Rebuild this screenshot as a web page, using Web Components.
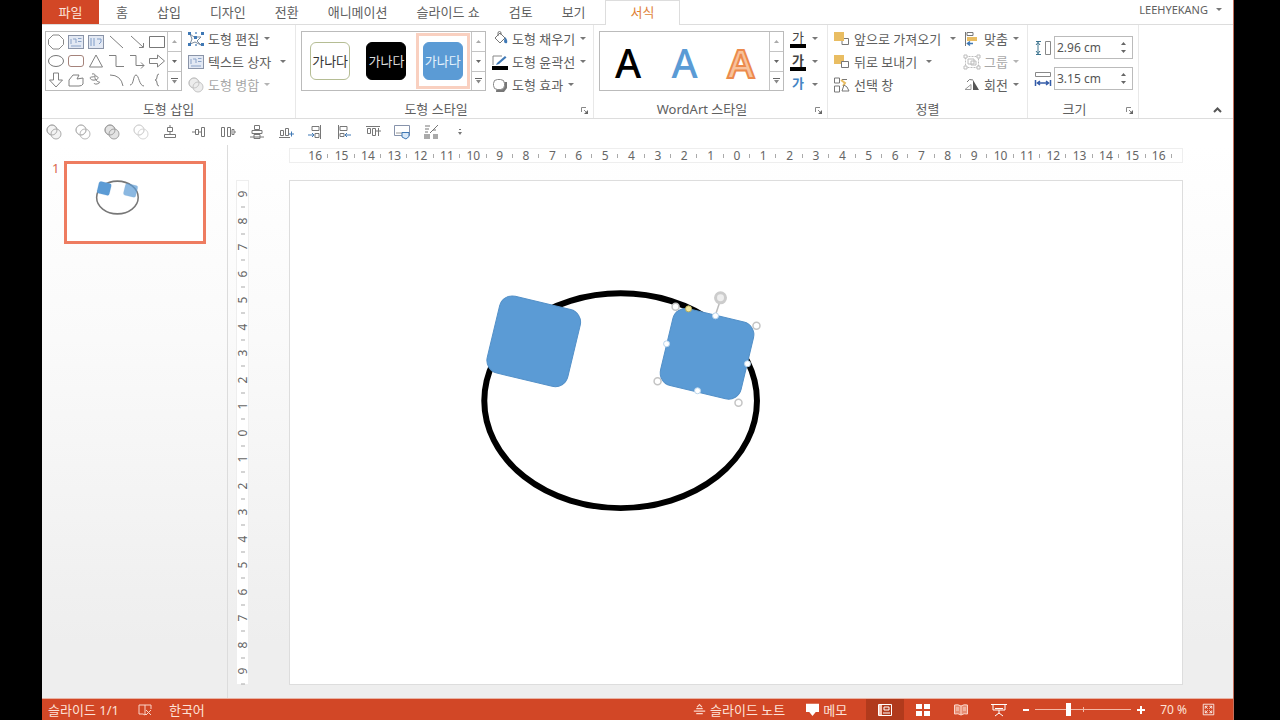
<!DOCTYPE html>
<html lang="ko">
<head>
<meta charset="utf-8">
<title>프레젠테이션 편집기</title>
<style>
html,body{margin:0;height:100%;background:#000}
body{font-family:"Noto Sans","Noto Sans CJK KR",sans-serif;font-size:13px;line-height:20px;color:#606060}
</style>
</head>
<body>
<deck-app></deck-app>
<script>
const define = (name, html, setup) => {
  const t = document.createElement('template');
  t.innerHTML = html;
  customElements.define(name, class extends HTMLElement {
    connectedCallback() {
      if (this.shadowRoot) return;
      this.attachShadow({ mode: 'open' }).append(t.content.cloneNode(true));
      if (setup) setup(this, this.shadowRoot);
    }
  });
};

const G = '#8a8a8a', B = '#3f78b5', Y = '#e9bd62';
const merge = (fill, o) => `<g fill="${fill}" stroke="${G}" opacity="${o}"><circle cx="6" cy="6" r="5"/><circle cx="10" cy="10" r="5"/><circle cx="6" cy="6" r="5" fill="none"/></g>`;
const ln = (d, c = '#808080') => `<path d="${d}" fill="none" stroke="${c}"/>`;
const ICONS = {
  circle: `<path d="M5 1h6l4.500 4.500v5L11 15H5L.5 10.500v-5z" stroke-linejoin="round" fill="none" stroke="#888"/>`,
  textbox: `<rect x=".5" y="1.500" width="15" height="13" fill="#e3e9f4" stroke="#8a94a8"/><path d="M3 10V5M5 5h3v4M10 4.500h3.500M10 7.500h3.500M3 12h10" fill="none" stroke="#8ba3c8"/>`,
  vtextbox: `<rect x=".5" y="1.500" width="15" height="13" fill="#e3e9f4" stroke="#8a94a8"/><path d="M9 5h4v3l-2 2M3 4v8M6 4v8" fill="none" stroke="#7f9cc8"/>`,
  line: ln('M1 2l13 12'),
  arrow: ln('M2 2l12 11M14.500 9v4.500H10'),
  rect: `<path d="M.5 2.500h15v11H.5z" fill="none" stroke="#777"/>`,
  oval: `<ellipse cx="8" cy="8" rx="7.500" ry="5.500" fill="none" stroke="#777"/>`,
  rrect: `<rect x=".5" y="2.500" width="15" height="11" rx="2.500" fill="none" stroke="#a5837b"/>`,
  tri: ln('M8 2L14.500 14h-13z'),
  elbow: ln('M0 2.500h7v11h8'),
  elbowarrow: ln('M1 2.500h6v10h8M12 9.500l3 3-3 3'),
  rarrow: ln('M.5 5.500h8V2l7 6-7 6v-3.500h-8z'),
  darrow: ln('M5.500 1h5v7h4L8 15 1.500 8h4z'),
  free: ln('M5 3h6L9 7l6-1v6q-1 2-4 2H1V8z'),
  scribble: ln('M4 2c4-1 4 3 0 3s-1 4 3 3 4-3 1-4 0 6 3 6-4 4-5 1'),
  arc: ln('M1 3q11 0 13 11'),
  curve: ln('M1 13C5 13 4 3 7 3s3 11 8 11'),
  brace: ln('M10 2Q8 2 8 5t-2 3q2 0 2 3t2 3'),
  edit: `<path d="M2 3l4 3h7l-4 4 4 4-6-3-5 2 2-5z" fill="none" stroke="#7a8a9c"/><g fill="${B}"><path d="M0 1h3v3H0zM0 12h3v3H0zM13 1h3v3h-3zM13 12h3v3h-3zM6 5h3v3H6z"/><path d="M7 1h2v2H7zM7 13h2v2H7z" opacity=".6"/></g>`,
  merge: merge('#ddd', .9),
  union: merge('#eee', .7),
  combine: merge('none', .6),
  fragment: merge('#ddd', .8),
  subtract: merge('none', .35),
  bucket: `<path d="M3 7l5-5 5 5-5 5z" fill="#fff" stroke="#777"/><path d="M6 5V2q0-1.500 1.500-1.500T9 2v2" fill="none" stroke="#777"/><path d="M13 6q3 3 2 6-3 1-3-2z" fill="${B}"/>`,
  outline: `<path d="M1 2h9M1 2v9" stroke="#888" fill="none"/><path d="M5 9l8-7 1.500 1.500L7 10l-3 1z" fill="${B}"/><path d="M0 12h16v4H0z" fill="#000"/>`,
  effect: `<path d="M5 5h10v6l-3 4H4z" fill="#777"/><rect x="1.500" y="2.500" width="11" height="10" rx="4" fill="#fff" stroke="#888"/>`,
  front: `<path d="M8 7.500h6.500v6H8z" fill="#fff" stroke="#777"/><path d="M0 1h10v9H0z" fill="${Y}"/>`,
  back: `<path d="M0 1h10v9H0z" fill="${Y}"/><path d="M7.500 7.500h7v6h-7z" fill="#fff" stroke="#777"/>`,
  pane: `<path d="M.5 1h5v5h-5zM.5 9h5v6h-5zM8 2.500h5" fill="#fff" stroke="#777"/><path d="M7 3l4 3-2 3" stroke="${Y}" stroke-width="2" fill="none"/><path d="M10 8l-2 6h7l-2-4z" fill="none" stroke="#777"/>`,
  align: `<path d="M1.500 1v14" stroke="#777"/><path d="M3 1.500h6v3H3z" fill="none" stroke="#777"/><path d="M3 6h10v4H3z" fill="${Y}"/><path d="M3 12.500h6M6 10.500l-2.500 2 2.500 2" stroke="${B}" stroke-width="1.500" fill="none"/>`,
  group: `<g fill="none" stroke="#888"><path d="M1.500 2.500h13v11h-13z" stroke-dasharray="2 1"/><path d="M4 5h6v5H4zM7 7h5v4H7z"/><path d="M0 1h3v3H0zM13 1h3v3h-3zM0 12h3v3H0zM13 12h3v3h-3z" fill="#fff"/></g>`,
  rotate: `<path d="M1 12.500h6v-5z" fill="#fff" stroke="#999"/><path d="M9 13V3l6 10z" fill="#555"/><path d="M3 5q2-4 6-2" fill="none" stroke="#777"/>`,
  height: `<path d="M3 2v12M1 1.500h5M1 14.500h5M1 5l2-2.500L5 5M1 11l2 2.500L5 11" stroke="#3d748f" fill="none"/><path d="M10.500 1.500h5v13h-5z" fill="#fff" stroke="#888"/>`,
  width: `<path d="M.5 1.500h15v4H.5z" fill="#fff" stroke="#888"/><path d="M2 12h12M.5 9v6M15.500 9v6M5 10l-2.500 2L5 14M11 10l2.500 2-2.500 2" stroke="#345ca8" stroke-width="1.500" fill="none"/>`,
  acenter: ln('M8 1v2M5.500 3.500h5v4h-5zM8 8v2M2.500 10.500h11v3h-11z', '#777'),
  dleft: ln('M1 8h3M4.500 5.500h3v5h-3zM10.500 3.500h3v9h-3zM8 8h2', '#777'),
  dright: ln('M1.500 3.500h3v9h-3zM7.500 3.500h3v9h-3zM12 5.500h2v5h-2zM14 8h2', '#777'),
  amid: ln('M5.500 1.500h5v4h-5zM3 6.500h10v3H3zM5 10.500h6v4H5zM1 13h14', '#777'),
  bottom: ln('M1 13.500h11M2.500 6.500h3v5h-3zM7.500 4.500h3v7h-3z', '#777') + ln('M11 10h5M13.500 7.500v5', B),
  right: ln('M13.500 1v14M5 2.500h7v4H5zM8 9.500h4v4H8z', '#777') + ln('M1 11h6M5 9l2 2-2 2', B),
  left: ln('M2.500 1v14M4 2.500h7v4H4zM4 9.500h4v3H4z', '#777') + ln('M15 11H9M11 9l-2 2 2 2', B),
  top: ln('M1 2.500h14M2.500 4.500h3v5h-3zM7.500 4.500h3v7h-3z', '#777') + ln('M13.500 4v8M11 7h5', '#777'),
  picture: `<path d="M.5 1.500h15v10H.5z" fill="#fff" stroke="#8793ab"/><path d="M2 9h6" stroke="#999"/><path d="M8 8.500h7v4l-3 2.500-4-2z" fill="#d9e8f7" stroke="${B}"/>`,
  eyedrop: ln('M2 2h5M2 5h4M2 8h3M7 9l8-8M10 6h3M10 12.500h5M12.500 10v5', '#777') + '<path d="M1 10h6v5H1zM10 10h5v5h-5z" fill="#aaa"/>',
  more: '<path d="M7 5h2v1H7zM6 8h4l-2 3z" fill="#777"/>',
  proof: `<g stroke="#fbd5c9" fill="none"><path d="M8 3v10M8 3H2v9h4l2 1 1-1M8 3h6v4M9 8l5 5M14 8l-5 5"/></g>`,
  notes: `<g stroke="#fbd5c9" fill="none"><path d="M4 7h8M5 5l3-3 3 3M1 10h14M4 13h8" stroke-width="1.500"/></g>`,
  memo: `<path d="M0 1h16v10h-4l-4 5-4-5H0z" fill="#fff"/>`,
  normal: `<path d="M1.500 2.500h13v11h-13z" fill="none" stroke="#fff"/><path d="M2 3h3v10H2z" fill="#f7c5b5"/><path d="M7 5h5v3H7zM6 11h7" fill="none" stroke="#fff"/>`,
  sorter: `<path d="M1 2h6v5H1zM9 2h6v5H9zM1 9h6v5H1zM9 9h6v5H9z" fill="#fff"/>`,
  reading: `<path d="M8 4Q5 2 1.500 3v9Q5 11 8 13q3-2 6.500-1V3Q11 2 8 4v9" fill="#e78c72" stroke="#fbd5c9"/><path d="M3 6h3M3 8h3M10 6h3M10 8h3" stroke="#fbd5c9"/>`,
  show: `<path d="M0 2.500h16M2 3v5h12V3M8 8v4M4 14l4-3 4 3" fill="none" stroke="#fff"/><path d="M4 6.500h8" stroke="#fff"/>`,
  fit: `<g fill="none" stroke="#fff"><path d="M1.500 1.500h13v13h-13z"/><path d="M4 7V4h3M9 4h3v3M12 9v3H9M7 12H4V9M4 4l3 3M12 4L9 7M12 12L9 9M4 12l3-3"/></g>`
};
define('ui-icon', `<style>:host{display:inline-flex;flex:none;width:16px;height:16px}:host([small]){width:13px;height:13px}svg{width:100%;height:100%;overflow:visible}</style>`,
  (h, r) => r.innerHTML += `<svg viewBox="0 0 16 16" aria-hidden="true">${ICONS[h.getAttribute('name')] || ''}</svg>`);

const BTN = 'button{all:unset;box-sizing:border-box;cursor:default;display:flex;align-items:center}';
const CARET = '.caret{flex:none;border:solid transparent;border-width:3px 3px 0;border-top-color:#777}';

define('ribbon-tab', `<style>:host{display:flex}${BTN}
 button{padding:0;white-space:nowrap}
 :host([kind=file]) button{background:#d24726;color:#fbe3da;width:57px;justify-content:center;margin-right:-12px}
 :host([kind=active]){margin:0 0 -1px -10px}
 :host([kind=active]) button{background:#fff;color:#e07f35;border:1px solid #ddd;border-bottom:0;padding:0 25px 2px}
 </style><button type="button" role="tab"><slot></slot></button>`);

define('ribbon-group', `<style>
 :host{display:grid;grid-template-rows:1fr 20px;box-sizing:border-box;border-right:1px solid #e8e8e8;padding-top:2px;position:relative}
 .body{display:flex;align-items:flex-start}
 .name{text-align:center;line-height:22px}
 :host([launcher]) .name{padding-right:17px}
 button{all:unset;position:absolute;right:4px;bottom:3px;width:9px;height:9px}
 svg{display:block}
 </style><div class="body"><slot></slot></div><div class="name"></div>`, (h, r) => {
  r.querySelector('.name').textContent = h.getAttribute('name');
  if (h.hasAttribute('launcher')) r.innerHTML += `<button type="button" aria-label="${h.getAttribute('name')} 옵션"><svg width="9" height="9"><path d="M1.500 6V1.500H6M4 4l3 3" fill="none" stroke="#888"/><path d="M8 4v4H4z" fill="#666"/></svg></button>`;
});

define('tool-button', `<style>:host{display:block;height:23px}${BTN}${CARET}
 button{height:100%;gap:4px;white-space:nowrap}
 .caret{margin-left:1px}
 :host([wide]) .caret{margin-left:5px}
 :host([disabled]){opacity:.55}
 </style><button type="button"><slot></slot></button>`, (h, r) => {
  const b = r.querySelector('button');
  b.insertAdjacentHTML('afterbegin', `<ui-icon name="${h.getAttribute('icon')}"></ui-icon>`);
  if (!h.hasAttribute('plain')) b.insertAdjacentHTML('beforeend', '<span class="caret"></span>');
  b.disabled = h.hasAttribute('disabled');
});

define('glyph-button', `<style>:host{display:block;height:23px}${BTN}${CARET}
 button{height:100%;gap:6px}
 .g{width:16px;text-align:center;font-size:13px;line-height:14px;height:18px;box-sizing:border-box;border-bottom:4px solid #000;color:#444}
 :host([look=outline]) .g{font-weight:bold}
 :host([look=glow]) .g{border-color:transparent;color:#4585c4;font-weight:bold}
 </style><button type="button"><span class="g"><slot></slot></span><span class="caret"></span></button>`);

define('gallery-box', `<style>:host{display:flex;height:60px;box-sizing:border-box;border:1px solid #bbb;background:#fff;margin-top:4px}
 .items{display:flex;flex:1}
 .bar{display:grid;grid-template-rows:repeat(3,1fr);width:13px;border-left:1px solid #c4c4c4}
 button{all:unset;display:flex;align-items:center;justify-content:center}
 button+button{border-top:1px solid #c4c4c4}
 </style><div class="items"><slot></slot></div>
 <div class="bar"><button type="button" aria-label="위로"><svg width="5" height="3"><path d="M0 3h5L2.500 0z" fill="#aaa"/></svg></button>
 <button type="button" aria-label="아래로"><svg width="5" height="3"><path d="M0 0h5L2.500 3z" fill="#666"/></svg></button>
 <button type="button" aria-label="자세히"><svg width="7" height="6"><path d="M0 .5h7" stroke="#666"/><path d="M1 2h5L3.500 5.500z" fill="#888"/></svg></button></div>`);

define('shape-grid', `<style>:host{display:grid;grid-template-columns:repeat(6,1fr);grid-template-rows:repeat(3,1fr);flex:1;place-items:center}</style>`, (h, r) => {
  r.innerHTML += 'circle textbox vtextbox line arrow rect oval rrect tri elbow elbowarrow rarrow darrow free scribble arc curve brace'
    .split(' ').map(n => `<ui-icon name="${n}"></ui-icon>`).join('');
});

define('style-swatch', `<style>:host{display:flex;flex:1;align-items:center;justify-content:center;margin:1px;border:3px solid transparent}
 :host([selected]){border-color:#f9d0c0}
 button{all:unset;width:38px;height:36px;border:1px solid var(--line);border-radius:6px;background:var(--fill);color:var(--ink);text-align:center;line-height:32px;white-space:nowrap}
 </style><button type="button"><slot></slot></button>`);

define('art-letter', `<style>:host{display:flex;flex:1;align-items:center;justify-content:center}
 button{all:unset;font-size:40px;line-height:56px;padding-top:4px;color:#000;font-weight:500}
 :host([look=blue]) button{color:#5b9bd5}
 :host([look=orange]) button{color:#f8c29c;font-weight:600;-webkit-text-stroke:2px #ec8a4c}
 </style><button type="button"><slot></slot></button>`);

define('spin-field', `<style>:host{display:flex;align-items:center;gap:3px;min-width:0}
 label{display:flex}
 .box{display:flex;flex:1;min-width:0;box-sizing:border-box;height:23px;border:1px solid #bbb;background:#fff}
 input{all:unset;flex:1 1 0;width:0;min-width:0;padding-left:2px;font-size:12px;color:#555}
 .s{display:grid;width:17px;padding:2px 0}
 button{all:unset;display:flex;align-items:center;justify-content:center}
 </style><label for="v"></label><div class="box"><input id="v" type="text"><span class="s"><button type="button" aria-label="늘리기"><svg width="5" height="3"><path d="M0 3h5L2.500 0z" fill="#666"/></svg></button><button type="button" aria-label="줄이기"><svg width="5" height="3"><path d="M0 0h5L2.500 3z" fill="#666"/></svg></button></span></div>`, (h, r) => {
  r.querySelector('label').innerHTML = `<ui-icon name="${h.getAttribute('icon')}"></ui-icon>`;
  const i = r.querySelector('input');
  i.setAttribute('aria-label', h.getAttribute('label'));
  i.value = h.getAttribute('value');
});

define('quick-bar', `<style>:host{display:flex;align-items:center;gap:13px;height:26px;padding-left:4px;background:#fff}
 button{all:unset;display:flex}</style>`, (h, r) => {
  r.innerHTML += 'union combine fragment subtract acenter dleft dright amid bottom right left top picture eyedrop more'
    .split(' ').map(n => `<button type="button" aria-label="${n}"><ui-icon name="${n}"></ui-icon></button>`).join('');
});

define('ruler-bar', `<style>
 :host{display:flex;box-sizing:border-box;background:#fff;font-size:12px;line-height:14px;color:#666;border:1px solid #eee;padding:0 10px 0 12px}
 span{flex:1 1 0;position:relative;display:flex;align-items:center;justify-content:center}
 span::after,span:first-child::before{content:"";position:absolute;background:#aaa;width:1px;height:4px;right:0;top:5px}
 :host([vertical]){flex-direction:column;padding:0}
 :host([vertical]) span{writing-mode:vertical-rl;transform:rotate(180deg);line-height:12px}
 :host([vertical]) span::after{width:4px;height:1px;left:3px;right:auto;top:0}
 </style>`, (h, r) => {
  const n = +h.getAttribute('extent');
  for (let i = -n; i <= n; i++) {
    const s = document.createElement('span');
    s.textContent = Math.abs(i);
    r.append(s);
  }
});

define('slide-view', `<style>:host{display:block;background:#fff}svg{display:block;width:100%;height:auto}
 .ring{stroke:#000;stroke-width:6}
 .sel{fill:#fff;stroke:#c4c4c4;stroke-width:1.500}
 :host([thumb]) .ring{stroke:#777;stroke-width:10}
 :host([thumb]) .handles{display:none}
 :host([thumb]) .second{opacity:.7}
 </style><svg viewBox="0 0 893 504" role="img" aria-label="타원과 둥근 사각형 두 개">
 <ellipse class="ring" cx="331" cy="220" rx="136.500" ry="107.500" fill="none"/>
 <g fill="#5b9bd5" stroke="#5390c8" stroke-width="1"><rect x="-41.500" y="-39.500" width="83" height="79" rx="13" transform="translate(244 160.500) rotate(13.500)"/>
 <rect class="second" x="-41.500" y="-39.500" width="83" height="79" rx="13" transform="translate(417.500 173) rotate(13.500)"/></g>
 <g class="handles"><path d="M426 134l4-12" stroke="#bbb" stroke-width="1.500"/>
 <circle cx="431" cy="117" r="5" fill="#eee" stroke="#ccc" stroke-width="3"/>
 <g class="sel"><circle cx="386" cy="126" r="3.500"/><circle cx="467" cy="145" r="3.500"/><circle cx="449" cy="222" r="3.500"/><circle cx="368" cy="200.500" r="3.500"/></g>
 <g fill="#fff" stroke="#b8d3ea"><circle cx="426" cy="135" r="3"/><circle cx="377" cy="163" r="3"/><circle cx="458" cy="183" r="3"/><circle cx="408" cy="210" r="3"/></g>
 <circle cx="399" cy="128" r="3" fill="#f3e9a0" stroke="#b9b05c"/></g></svg>`);

define('thumb-list', `<style>:host{display:flex;align-items:flex-start;box-sizing:border-box;padding:16px 21px 0 10px;gap:5px;border-right:1px solid #dcdcdc}
 .n{color:#d9674c;line-height:14px;width:7px}
 slide-view{flex:1;border:3px solid #ee7c60}
 </style><span class="n">1</span><slide-view thumb></slide-view>`);

define('work-area', `<style>
 :host{display:grid;grid-template-columns:186px 1fr;background:linear-gradient(#fff,#fafafa 35%,#eee 90%)}
 .stage{display:grid;grid-template-columns:13px 1fr;grid-template-rows:15px auto;column-gap:40px;row-gap:17px;padding:3px 50px 0 8px;align-content:start}
 .stage>:first-child{grid-column:2}
 .page{border:1px solid #ddd;margin:0}
 </style><thumb-list></thumb-list><div class="stage"><ruler-bar extent="16"></ruler-bar><ruler-bar vertical extent="9"></ruler-bar><slide-view class="page"></slide-view></div>`);

define('status-bar', `<style>
 :host{display:flex;align-items:center;height:21px;background:#d24726;color:#fde2d8;padding:0 18px 0 6px;border-top:1px solid #e9b3a4;white-space:nowrap}
 ${BTN}
 button{gap:4px;height:100%}
 .lang{margin-left:18px}.lang2{margin-left:16px}.right{margin-left:auto;display:flex;align-items:center;height:100%}
 .memo{margin-left:21px}
 .views{display:flex;height:100%;margin:0 4px 0 19px}
 .views button{width:38px;justify-content:center}
 .views .on{background:#b13a1c}
 input{appearance:none;width:96px;height:16px;margin:0 6px 0 5px;background:linear-gradient(#f3b9a7,#f3b9a7) center/1px 5px no-repeat,linear-gradient(#f3b9a7,#f3b9a7) center/100% 1px no-repeat}
 input::-webkit-slider-thumb{appearance:none;width:5px;height:13px;background:#fff}
 .sign{width:8px;height:8px}
 .zoom{font-size:12px;margin:0 15px}
 </style><span>슬라이드 1/1</span><button type="button" class="lang" aria-label="맞춤법 검사"><ui-icon name="proof"></ui-icon></button><button type="button" class="lang2">한국어</button>
 <div class="right"><button type="button"><ui-icon name="notes" small></ui-icon>슬라이드 노트</button>
 <button type="button" class="memo"><ui-icon name="memo" small></ui-icon>메모</button>
 <div class="views"><button type="button" class="on" aria-label="기본"><ui-icon name="normal"></ui-icon></button><button type="button" aria-label="여러 슬라이드"><ui-icon name="sorter"></ui-icon></button><button type="button" aria-label="읽기용 보기"><ui-icon name="reading"></ui-icon></button><button type="button" aria-label="슬라이드 쇼"><ui-icon name="show"></ui-icon></button></div>
 <button type="button" class="sign" aria-label="축소"><svg width="8" height="8"><path d="M1 4h6" stroke="#fff" stroke-width="2"/></svg></button>
 <input type="range" min="0" max="100" value="34" aria-label="확대/축소">
 <button type="button" class="sign" aria-label="확대"><svg width="8" height="8"><path d="M0 4h8M4 0v8" stroke="#fff" stroke-width="2"/></svg></button>
 <span class="zoom">70 %</span><button type="button" aria-label="창에 맞춤"><ui-icon name="fit" small></ui-icon></button></div>`);

define('deck-app', `<style>
 :host{display:grid;grid-template-rows:25px 94px 26px 1fr auto;box-sizing:border-box;min-height:100vh;margin:0 46px 0 42px;background:#fff;border-right:1px solid #c4705c}
 .tabs{display:flex;gap:29px;border-bottom:1px solid #ddd}
 .user{all:unset;margin:0 11px 5px auto;font-size:11px;display:flex;align-items:center;gap:8px}
 ${CARET}
 .ribbon{display:grid;grid-template-columns:254px 298px 234px 200px 111px 1fr;border-bottom:1px solid #ddd}
 .col{display:grid;grid-template-rows:repeat(3,23px);justify-items:start}
 .g1{width:137px;margin-left:3px}.g2,.g3{width:185px;margin-left:5px}
 .c1,.c2,.c3,.c4{margin-left:6px}.c4{width:130px}
 .size{display:grid;gap:8px;margin:9px 5px 0 7px;flex:1;min-width:0}
 .fold{all:unset;align-self:end;justify-self:end;margin:0 11px 5px 0;display:flex}
 </style>
 <div class="tabs" role="tablist"><ribbon-tab kind="file">파일</ribbon-tab><ribbon-tab>홈</ribbon-tab><ribbon-tab>삽입</ribbon-tab><ribbon-tab>디자인</ribbon-tab><ribbon-tab>전환</ribbon-tab><ribbon-tab>애니메이션</ribbon-tab><ribbon-tab>슬라이드 쇼</ribbon-tab><ribbon-tab>검토</ribbon-tab><ribbon-tab>보기</ribbon-tab><ribbon-tab kind="active">서식</ribbon-tab>
 <button type="button" class="user">LEEHYEKANG<span class="caret"></span></button></div>
 <div class="ribbon">
 <ribbon-group name="도형 삽입"><gallery-box class="g1"><shape-grid></shape-grid></gallery-box>
  <div class="col c1"><tool-button icon="edit">도형 편집</tool-button><tool-button icon="textbox" wide>텍스트 상자</tool-button><tool-button icon="merge" disabled>도형 병합</tool-button></div></ribbon-group>
 <ribbon-group name="도형 스타일" launcher><gallery-box class="g2"><style-swatch style="--fill:#fff;--line:#b5bd94;--ink:#333">가나다</style-swatch><style-swatch style="--fill:#000;--line:#000;--ink:#ddd">가나다</style-swatch><style-swatch selected style="--fill:#5b9bd5;--line:#5b9bd5;--ink:#e6f2fc">가나다</style-swatch></gallery-box>
  <div class="col c2"><tool-button icon="bucket">도형 채우기</tool-button><tool-button icon="outline">도형 윤곽선</tool-button><tool-button icon="effect">도형 효과</tool-button></div></ribbon-group>
 <ribbon-group name="WordArt 스타일" launcher><gallery-box class="g3"><art-letter>A</art-letter><art-letter look="blue">A</art-letter><art-letter look="orange">A</art-letter></gallery-box>
  <div class="col c3"><glyph-button>가</glyph-button><glyph-button look="outline">가</glyph-button><glyph-button look="glow">가</glyph-button></div></ribbon-group>
 <ribbon-group name="정렬"><div class="col c4"><tool-button icon="front" wide>앞으로 가져오기</tool-button><tool-button icon="back" wide>뒤로 보내기</tool-button><tool-button icon="pane" plain>선택 창</tool-button></div>
  <div class="col"><tool-button icon="align">맞춤</tool-button><tool-button icon="group" disabled>그룹</tool-button><tool-button icon="rotate">회전</tool-button></div></ribbon-group>
 <ribbon-group name="크기" launcher><div class="size"><spin-field icon="height" label="높이" value="2.96 cm"></spin-field><spin-field icon="width" label="너비" value="3.15 cm"></spin-field></div></ribbon-group>
 <button type="button" class="fold" aria-label="리본 축소"><svg width="9" height="6"><path d="M1 5l3.500-3.500L8 5" fill="none" stroke="#555" stroke-width="2"/></svg></button>
 </div>
 <quick-bar></quick-bar>
 <work-area></work-area>
 <status-bar></status-bar>`);
</script>
</body>
</html>
